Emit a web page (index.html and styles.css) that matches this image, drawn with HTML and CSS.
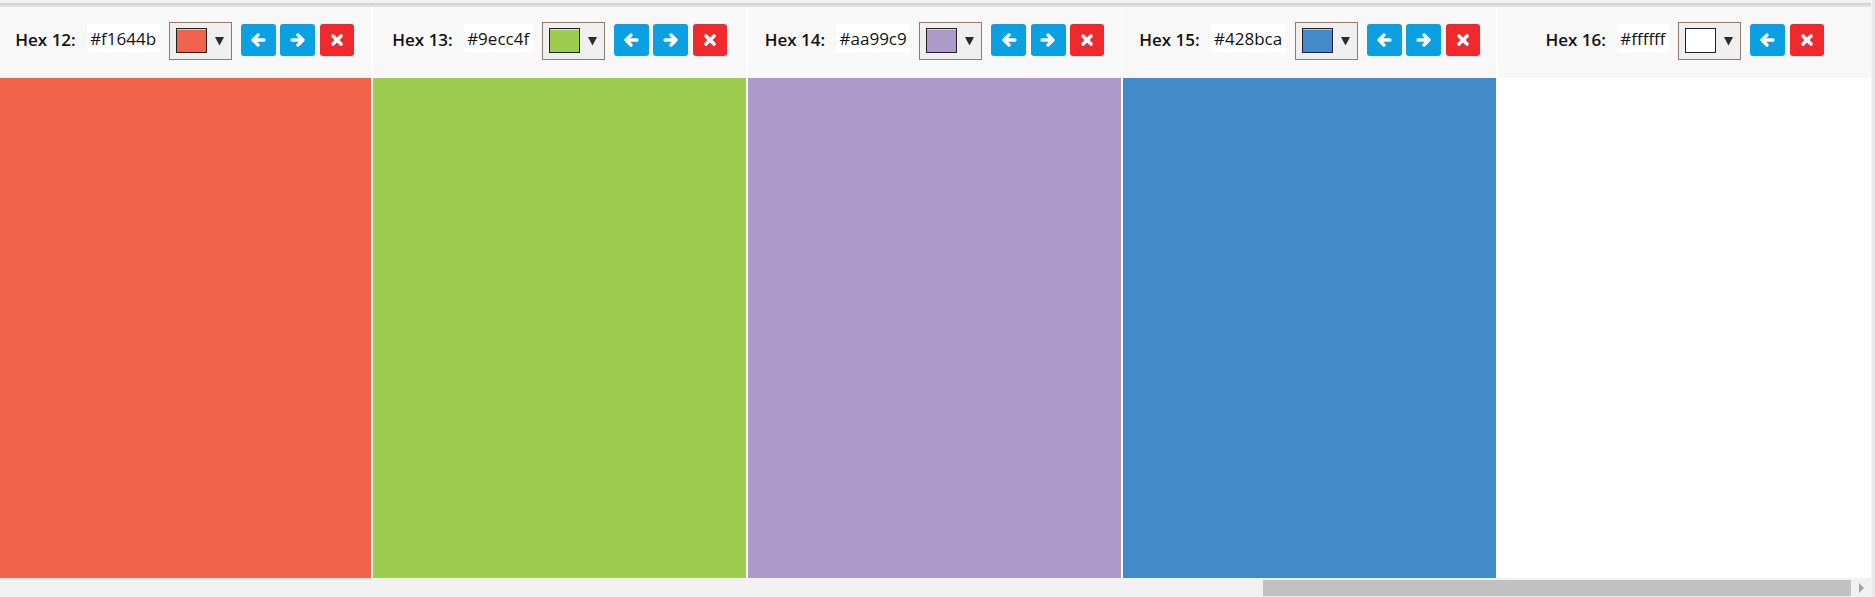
FILE: index.html
```html
<!DOCTYPE html>
<html lang="en">
<head>
<meta charset="utf-8">
<title>Palette</title>
<link rel="stylesheet" href="styles.css">
</head>
<body>
<div class="page">
  <div class="main">
    <div class="topbar"><div class="topbar-light"></div><div class="topbar-shade"></div></div>
    <div class="board">
      <div class="columns">
        <div class="col">
          <div class="col-head">
            <span class="label">Hex 12:</span>
            <span class="hex">#f1644b</span>
            <div class="picker"><span class="swatch" style="background:#f1644b"></span><svg class="caret" width="9" height="9" viewBox="0 0 9 9"><polygon points="0,0 9,0 4.5,8.6"/></svg></div>
            <div class="btns">
              <button class="btn btn-blue" type="button"><svg width="16" height="14" viewBox="0 0 16 14"><polyline points="8,2 3,7 8,12"/><line x1="3.5" y1="7" x2="14" y2="7"/></svg></button>
              <button class="btn btn-blue" type="button"><svg width="16" height="14" viewBox="0 0 16 14"><polyline points="8,2 13,7 8,12"/><line x1="2" y1="7" x2="12.5" y2="7"/></svg></button>
              <button class="btn btn-red" type="button"><svg width="12" height="12" viewBox="0 0 12 12"><line x1="2" y1="2" x2="10" y2="10"/><line x1="10" y1="2" x2="2" y2="10"/></svg></button>
            </div>
          </div>
          <div class="col-body c12"></div>
        </div>
        <div class="col">
          <div class="col-head">
            <span class="label">Hex 13:</span>
            <span class="hex">#9ecc4f</span>
            <div class="picker"><span class="swatch" style="background:#9ecc4f"></span><svg class="caret" width="9" height="9" viewBox="0 0 9 9"><polygon points="0,0 9,0 4.5,8.6"/></svg></div>
            <div class="btns">
              <button class="btn btn-blue" type="button"><svg width="16" height="14" viewBox="0 0 16 14"><polyline points="8,2 3,7 8,12"/><line x1="3.5" y1="7" x2="14" y2="7"/></svg></button>
              <button class="btn btn-blue" type="button"><svg width="16" height="14" viewBox="0 0 16 14"><polyline points="8,2 13,7 8,12"/><line x1="2" y1="7" x2="12.5" y2="7"/></svg></button>
              <button class="btn btn-red" type="button"><svg width="12" height="12" viewBox="0 0 12 12"><line x1="2" y1="2" x2="10" y2="10"/><line x1="10" y1="2" x2="2" y2="10"/></svg></button>
            </div>
          </div>
          <div class="col-body c13"></div>
        </div>
        <div class="col">
          <div class="col-head">
            <span class="label">Hex 14:</span>
            <span class="hex">#aa99c9</span>
            <div class="picker"><span class="swatch" style="background:#aa99c9"></span><svg class="caret" width="9" height="9" viewBox="0 0 9 9"><polygon points="0,0 9,0 4.5,8.6"/></svg></div>
            <div class="btns">
              <button class="btn btn-blue" type="button"><svg width="16" height="14" viewBox="0 0 16 14"><polyline points="8,2 3,7 8,12"/><line x1="3.5" y1="7" x2="14" y2="7"/></svg></button>
              <button class="btn btn-blue" type="button"><svg width="16" height="14" viewBox="0 0 16 14"><polyline points="8,2 13,7 8,12"/><line x1="2" y1="7" x2="12.5" y2="7"/></svg></button>
              <button class="btn btn-red" type="button"><svg width="12" height="12" viewBox="0 0 12 12"><line x1="2" y1="2" x2="10" y2="10"/><line x1="10" y1="2" x2="2" y2="10"/></svg></button>
            </div>
          </div>
          <div class="col-body c14"></div>
        </div>
        <div class="col">
          <div class="col-head">
            <span class="label">Hex 15:</span>
            <span class="hex">#428bca</span>
            <div class="picker"><span class="swatch" style="background:#428bca"></span><svg class="caret" width="9" height="9" viewBox="0 0 9 9"><polygon points="0,0 9,0 4.5,8.6"/></svg></div>
            <div class="btns">
              <button class="btn btn-blue" type="button"><svg width="16" height="14" viewBox="0 0 16 14"><polyline points="8,2 3,7 8,12"/><line x1="3.5" y1="7" x2="14" y2="7"/></svg></button>
              <button class="btn btn-blue" type="button"><svg width="16" height="14" viewBox="0 0 16 14"><polyline points="8,2 13,7 8,12"/><line x1="2" y1="7" x2="12.5" y2="7"/></svg></button>
              <button class="btn btn-red" type="button"><svg width="12" height="12" viewBox="0 0 12 12"><line x1="2" y1="2" x2="10" y2="10"/><line x1="10" y1="2" x2="2" y2="10"/></svg></button>
            </div>
          </div>
          <div class="col-body c15"></div>
        </div>
        <div class="col">
          <div class="col-head">
            <span class="label">Hex 16:</span>
            <span class="hex">#ffffff</span>
            <div class="picker"><span class="swatch" style="background:#ffffff"></span><svg class="caret" width="9" height="9" viewBox="0 0 9 9"><polygon points="0,0 9,0 4.5,8.6"/></svg></div>
            <div class="btns">
              <button class="btn btn-blue" type="button"><svg width="16" height="14" viewBox="0 0 16 14"><polyline points="8,2 3,7 8,12"/><line x1="3.5" y1="7" x2="14" y2="7"/></svg></button>
              <button class="btn btn-red" type="button"><svg width="12" height="12" viewBox="0 0 12 12"><line x1="2" y1="2" x2="10" y2="10"/><line x1="10" y1="2" x2="2" y2="10"/></svg></button>
            </div>
          </div>
          <div class="col-body c16"></div>
        </div>
      </div>
    </div>
    <div class="hscroll">
      <div class="thumb"></div>
      <svg class="scroll-arrow" width="5" height="10" viewBox="0 0 5 10"><polygon points="0,0 5,5 0,10"/></svg>
    </div>
  </div>
  <div class="edge"></div>
</div>
</body>
</html>
```
FILE: styles.css
```css
html, body {
  margin: 0;
  padding: 0;
}
body {
  width: 1875px;
  height: 597px;
  overflow: hidden;
  background: #ffffff;
  font-family: "Open Sans", "Noto Sans", "Liberation Sans", sans-serif;
  color: #111111;
}
.page {
  display: flex;
  width: 1875px;
  height: 597px;
}
.main {
  width: 1871px;
  height: 597px;
  display: flex;
  flex-direction: column;
  overflow: hidden;
}
.edge {
  width: 3px;
  border-left: 1px solid #f4f4f4;
  background: #e9e9e9;
}
.topbar {
  height: 7px;
  display: flex;
  flex-direction: column;
}
.topbar-light {
  height: 3px;
  background: #f3f3f3;
}
.topbar-shade {
  height: 4px;
  background: linear-gradient(#cdcdcd, #e7e7e7);
}
.board {
  height: 571px;
  background: #ffffff;
  overflow: hidden;
}
.columns {
  display: flex;
  gap: 2px;
  margin-left: -2px;
  height: 100%;
}
.col {
  width: 373px;
  flex: none;
  display: flex;
  flex-direction: column;
}
.col-head {
  height: 71px;
  box-sizing: border-box;
  padding-top: 15px;
  background: #f9f8f8;
  display: flex;
  justify-content: center;
  align-items: flex-start;
}
.col-body {
  flex: 1;
}
.c12 { background: #f1644b; }
.c13 { background: #9ecc4f; }
.c14 { background: #aa99c9; }
.c15 { background: #428bca; }
.c16 { background: #ffffff; }
.label {
  font-size: 17px;
  font-weight: 600;
  line-height: 29px;
  margin-top: 3px;
  margin-right: 11px;
  white-space: nowrap;
}
.hex {
  font-size: 17px;
  font-weight: 400;
  line-height: 29px;
  height: 29px;
  margin-top: 2px;
  padding: 0 3.4px;
  background: #ffffff;
  margin-right: 9px;
  white-space: nowrap;
}
.picker {
  width: 63px;
  height: 38px;
  box-sizing: border-box;
  border: 1px solid #8f7b67;
  background: #efefef;
  display: flex;
  align-items: center;
  padding-left: 6px;
  margin-right: 9px;
}
.swatch {
  width: 31px;
  height: 25px;
  box-sizing: border-box;
  border: 1px solid #222222;
  box-shadow: inset 0 1px 0 rgba(255, 255, 255, 0.55);
  margin-right: 8px;
  margin-top: -1px;
}
.caret polygon {
  fill: #2b2b2b;
}
.btns {
  display: flex;
  gap: 4.6px;
  margin-top: 2px;
}
.btn {
  width: 35px;
  height: 32px;
  border: 0;
  border-radius: 3px;
  padding: 0;
  display: flex;
  align-items: center;
  justify-content: center;
}
.btn-blue { background: #0ba0e2; }
.btn-red { background: #f0292e; width: 34px; }
.btn svg polyline,
.btn svg line {
  fill: none;
  stroke: #ffffff;
  stroke-width: 3.3;
  stroke-linecap: round;
  stroke-linejoin: round;
}
.btn-red svg line {
  stroke-width: 3.6;
}
.hscroll {
  height: 19px;
  background: #f1f1f1;
  display: flex;
  align-items: flex-start;
}
.thumb {
  margin-left: 1263px;
  margin-top: 2px;
  width: 588px;
  height: 16px;
  background: #c1c1c1;
}
.scroll-arrow {
  margin-left: 8px;
  margin-top: 5px;
}
.scroll-arrow polygon {
  fill: #a3a3a3;
}
```
